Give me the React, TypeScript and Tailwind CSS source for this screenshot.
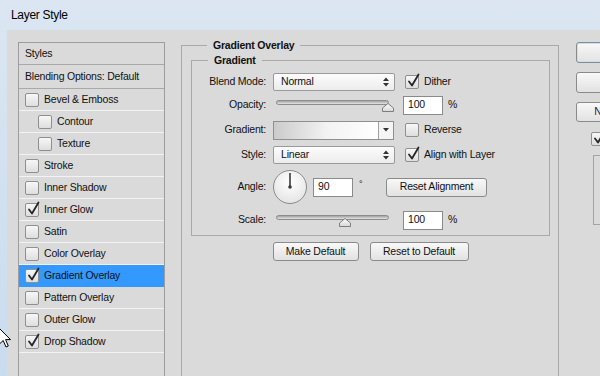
import React from "react";

// Photoshop "Layer Style" dialog, Gradient Overlay page

function CheckBox({ checked = false }: { checked?: boolean }) {
  return (
    <span className="relative inline-block h-[14px] w-[14px] shrink-0 rounded-[2px] border border-[#8f8f8f] bg-gradient-to-b from-[#f7f7f7] to-[#dedede]">
      {checked && (
        <svg
          className="absolute left-[1px] top-[-3px] overflow-visible"
          width="13"
          height="15"
          viewBox="0 0 13 15"
        >
          <path
            d="M2 8.5 L5 12.5 L11.5 1.5"
            fill="none"
            stroke="#262626"
            strokeWidth="1.8"
            strokeLinecap="round"
            strokeLinejoin="round"
          />
        </svg>
      )}
    </span>
  );
}

const styleRows = [
  { label: "Bevel & Emboss" },
  { label: "Contour", indent: true },
  { label: "Texture", indent: true },
  { label: "Stroke" },
  { label: "Inner Shadow" },
  { label: "Inner Glow", checked: true },
  { label: "Satin" },
  { label: "Color Overlay" },
  { label: "Gradient Overlay", checked: true, active: true },
  { label: "Pattern Overlay" },
  { label: "Outer Glow" },
  { label: "Drop Shadow", checked: true },
];

function StylesPanel() {
  return (
    <div className="mt-[12px] h-[345px] w-[147px] shrink-0 border border-[#9d9d9d] bg-[#dadada]">
      <div className="flex h-[22px] items-center border-b border-[#a9a9a9] pl-[6px]">Styles</div>
      <div className="flex h-[24px] items-center border-b border-[#a9a9a9] pl-[6px]">
        Blending Options: Default
      </div>
      {styleRows.map((r) => (
        <div
          key={r.label}
          className={
            "flex h-[22px] items-center gap-[5px] border-b " +
            (r.indent ? "pl-[19px] " : "pl-[6px] ") +
            (r.active ? "border-[#3399ff] bg-[#3399ff]" : "border-[#f3f3f3]")
          }
        >
          <CheckBox checked={r.checked} />
          <span>{r.label}</span>
        </div>
      ))}
    </div>
  );
}

function UpDown() {
  return (
    <svg width="6" height="10" viewBox="0 0 6 10">
      <path d="M0 4 L3 0.5 L6 4 Z M0 6 L3 9.5 L6 6 Z" fill="#333" />
    </svg>
  );
}

function Select({ value }: { value: string }) {
  return (
    <div className="flex h-[18px] w-[122px] shrink-0 items-center justify-between rounded-[2px] border border-[#9a9a9a] bg-gradient-to-b from-[#fcfcfc] to-[#ececec] pl-[7px] pr-[5px]">
      <span>{value}</span>
      <UpDown />
    </div>
  );
}

function NumBox({ value }: { value: string }) {
  return (
    <div className="flex h-[19px] w-[40px] shrink-0 items-center border border-[#8a8a8a] bg-white pl-[4px]">
      {value}
    </div>
  );
}

function Slider({ pos }: { pos: number }) {
  return (
    <div className="relative h-[20px] w-[119px] shrink-0">
      <div className="ml-[3px] mt-[5px] h-[5px] w-[113px] rounded-full border border-[#8c8c8c] bg-gradient-to-b from-[#a3a3a3] to-[#e4e4e4]" />
      <svg
        className="absolute top-[8px]"
        style={{ left: pos }}
        width="12"
        height="9"
        viewBox="0 0 12 9"
      >
        <defs>
          <linearGradient id="thumb" x1="0" y1="0" x2="0" y2="1">
            <stop offset="0" stopColor="#ffffff" />
            <stop offset="1" stopColor="#d6d6d6" />
          </linearGradient>
        </defs>
        <path d="M0.5 8.5 L0.5 5 L6 0.5 L11.5 5 L11.5 8.5 Z" fill="url(#thumb)" stroke="#7d7d7d" />
      </svg>
    </div>
  );
}

function Button({ label, className = "" }: { label: string; className?: string }) {
  return (
    <div
      className={
        "flex h-[19px] shrink-0 items-center justify-center rounded-[3px] border border-[#8a8a8a] bg-gradient-to-b from-[#f8f8f8] to-[#e2e2e2] " +
        className
      }
    >
      {label}
    </div>
  );
}

function Label({ text }: { text: string }) {
  return <span className="w-[81px] shrink-0 pr-[7px] text-right">{text}</span>;
}

function Dial() {
  return (
    <div className="h-[34px] w-[34px] shrink-0 rounded-full border border-[#8a8a8a] bg-[radial-gradient(circle_at_50%_35%,#ffffff,#dedede)]">
      <svg width="32" height="32" viewBox="0 0 32 32">
        <line x1="16" y1="16" x2="16" y2="2" stroke="#3a3a3a" strokeWidth="1.6" />
        <circle cx="16" cy="16" r="1.8" fill="#3a3a3a" />
      </svg>
    </div>
  );
}

function GradientPage() {
  return (
    <fieldset className="ml-[16px] mt-[8px] h-[360px] w-[378px] shrink-0 border border-[#a9a9a9] pl-[9px] pr-[8px]">
      <legend className="ml-[16px] px-[6px] font-bold leading-[14px]">Gradient Overlay</legend>
      <fieldset className="mt-[1px] border border-[#a9a9a9] pb-[5px] pt-[5px]">
        <legend className="ml-[16px] px-[6px] font-bold leading-[14px]">Gradient</legend>

        <div className="flex h-[20px] items-center">
          <Label text="Blend Mode:" />
          <Select value="Normal" />
          <span className="ml-[10px] flex items-center gap-[5px]">
            <CheckBox checked />
            Dither
          </span>
        </div>

        <div className="mt-[3px] flex h-[20px] items-center">
          <Label text="Opacity:" />
          <Slider pos={109} />
          <span className="ml-[11px]">
            <NumBox value="100" />
          </span>
          <span className="ml-[5px]">%</span>
        </div>

        <div className="mt-[5px] flex h-[20px] items-center">
          <Label text="Gradient:" />
          <div className="flex h-[19px] w-[121px] shrink-0 border border-[#8f8f8f]">
            <div className="flex-1 bg-gradient-to-r from-[#cbcbcb] via-[#f2f2f2] to-white" />
            <div className="flex w-[15px] items-center justify-center border-l border-[#a0a0a0] bg-[#f5f5f5]">
              <svg width="6" height="4" viewBox="0 0 6 4">
                <path d="M0 0 L6 0 L3 3.5 Z" fill="#333" />
              </svg>
            </div>
          </div>
          <span className="ml-[11px] flex items-center gap-[5px]">
            <CheckBox />
            Reverse
          </span>
        </div>

        <div className="mt-[5px] flex h-[20px] items-center">
          <Label text="Style:" />
          <Select value="Linear" />
          <span className="ml-[10px] flex items-center gap-[5px]">
            <CheckBox checked />
            Align with Layer
          </span>
        </div>

        <div className="mt-[5px] flex h-[34px] items-center">
          <Label text="Angle:" />
          <Dial />
          <span className="ml-[6px]">
            <NumBox value="90" />
          </span>
          <span className="w-[33px] shrink-0 self-start pl-[6px] pt-[8px] text-[9px]">°</span>
          <Button label="Reset Alignment" className="w-[101px]" />
        </div>

        <div className="mt-[6px] flex h-[20px] items-center">
          <Label text="Scale:" />
          <Slider pos={66} />
          <span className="ml-[11px]">
            <NumBox value="100" />
          </span>
          <span className="ml-[5px]">%</span>
        </div>
      </fieldset>

      <div className="mt-[6px] flex justify-center gap-[11px]">
        <Button label="Make Default" className="w-[86px]" />
        <Button label="Reset to Default" className="w-[99px]" />
      </div>
    </fieldset>
  );
}

function SideButtons() {
  return (
    <div className="ml-[17px] mt-[12px] flex w-[90px] shrink-0 flex-col">
      <Button label="OK" className="h-[21px] w-[90px] border-[#3c7fb1] shadow-[inset_0_0_0_1px_#bfe3f7]" />
      <Button label="Cancel" className="mt-[9px] h-[21px] w-[90px]" />
      <Button label="New Style..." className="mt-[9px] h-[20px] w-[90px] text-[#1a1a50]" />
      <div className="ml-[15px] mt-[9px] flex items-center gap-[5px]">
        <CheckBox checked />
        <span>Preview</span>
      </div>
      <div className="ml-[17px] mt-[8px] h-[70px] w-[60px] border border-[#a3a3a3]" />
    </div>
  );
}

export default function App() {
  return (
    <div className="relative flex h-[376px] w-[600px] flex-col overflow-hidden bg-gradient-to-b from-[#dbe6f2] to-[#c9dcee] font-['Liberation_Sans',Arial,sans-serif] text-[10.5px] tracking-[-0.2px] text-[#111]">
      <div className="flex h-[30px] shrink-0 items-center pl-[11px] text-[12px] tracking-[-0.3px] text-black">
        Layer Style
      </div>
      <div className="flex flex-1 pl-[7px]">
        <div className="flex flex-1 items-start bg-[#dadada] pl-[11px]">
          <StylesPanel />
          <GradientPage />
          <SideButtons />
        </div>
      </div>
      <svg
        className="absolute left-[-1px] top-[328px]"
        width="14"
        height="21"
        viewBox="0 0 14 21"
      >
        <path
          d="M0.5 0.5 L0.5 16 L4.2 12.5 L7 19 L9.3 18 L6.6 11.6 L11.5 11.6 Z"
          fill="#ffffff"
          stroke="#000000"
          strokeWidth="1"
          strokeLinejoin="round"
        />
      </svg>
    </div>
  );
}
